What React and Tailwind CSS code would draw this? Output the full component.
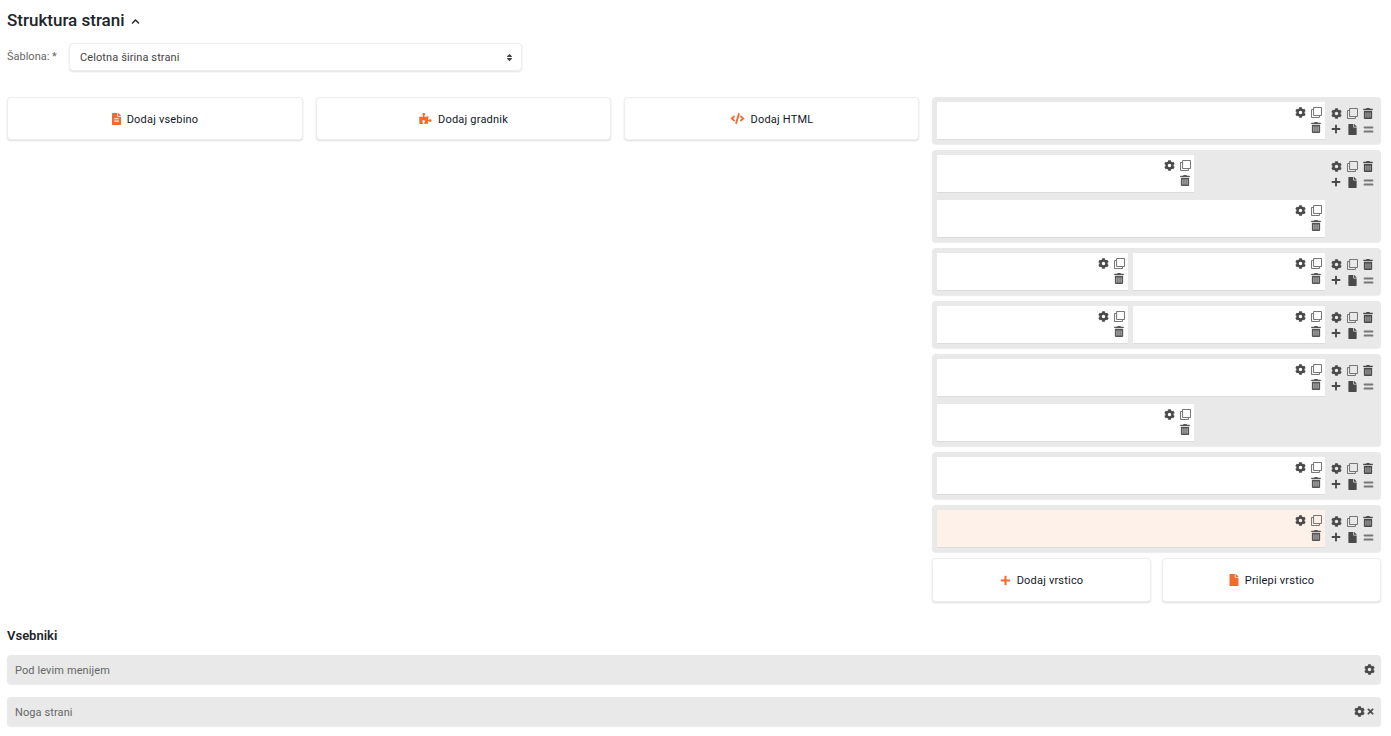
import React from 'react';
import { FaCog, FaRegClone, FaTrashAlt, FaPlus, FaFile, FaEquals, FaFileAlt, FaPuzzlePiece, FaCode, FaTimes, FaSort, FaChevronUp } from 'react-icons/fa';

const Cell = ({ width, tint }) => (
  <div className={`${width} h-[37px] ${tint ? 'bg-[#fdf1ea]' : 'bg-white'} flex flex-col items-end pt-[3px] pr-[3px] shadow-[0_1px_0_#dcdcdc]`}>
    <div className="flex items-center gap-[5px] h-[14px] text-[#4a4a4a]">
      <FaCog className="w-[11px] h-[11px]" />
      <FaRegClone className="w-[11px] h-[11px] text-[#777777]" />
    </div>
    <div className="flex items-center h-[14px] mt-[1px] mr-[1px] text-[#555555]">
      <FaTrashAlt className="w-[10px] h-[11px]" />
    </div>
  </div>
);

const RowTools = () => (
  <div className="w-[51px] shrink-0 grid grid-cols-[16px_16px_16px] grid-rows-[16px_16px] justify-items-center items-center content-start pl-[3px] pt-[3px] text-[#4a4a4a]">
    <FaCog className="w-[11px] h-[11px]" />
    <FaRegClone className="w-[11px] h-[11px] text-[#777777]" />
    <FaTrashAlt className="w-[10px] h-[11px]" />
    <FaPlus className="w-[10px] h-[10px]" />
    <FaFile className="w-[9px] h-[11px]" />
    <FaEquals className="w-[11px] h-[11px] text-[#777777]" />
  </div>
);

const Row = ({ children }) => (
  <div className="flex rounded-[4px] bg-[#e9e9e9] p-[5px] shadow-[0_1px_1px_rgba(0,0,0,0.08)]">
    <div className="w-[388px] shrink-0 flex flex-col gap-[8px]">{children}</div>
    <RowTools />
  </div>
);

const ActionButton = ({ icon, label, className = '', labelClass = 'pt-[2px]' }) => (
  <button className={`flex items-center justify-center gap-[6px] bg-white border border-[#eeeeee] rounded-[4px] shadow-[0_1px_2px_rgba(0,0,0,0.14)] text-[11px] text-[#111827] tracking-[0.2px] ${className}`}>
    {icon}
    <span className={labelClass}>{label}</span>
  </button>
);

const Container = ({ label, children }) => (
  <div className="h-[29px] flex items-center justify-between rounded-[4px] bg-[#e9e9e9] pl-[8px] pr-[6px] shadow-[0_1px_1px_rgba(0,0,0,0.08)] text-[11px] text-[#666666] tracking-[0.1px]">
    <span className="pt-[3px]">{label}</span>
    <div className="flex items-center gap-[1px] text-[#4a4a4a]">{children}</div>
  </div>
);

export default function App() {
  return (
    <div className="min-h-screen bg-white px-[7px] pt-[11px] font-['Roboto',sans-serif]">
      {/* Header */}
      <div className="flex items-center gap-[6px] h-[20px]">
        <h1 className="text-[17px] font-medium text-[#212529]">Struktura strani</h1>
        <FaChevronUp className="w-[9px] h-[9px] text-[#212529] mt-[1px]" />
      </div>

      {/* Predloga */}
      <div className="flex items-center mt-[12px] h-[28px]">
        <label className="w-[62px] text-[11px] text-[#666666]">Šablona: *</label>
        <div className="w-[453px] h-[28px] flex items-center justify-between bg-white border border-[#eeeeee] rounded-[4px] shadow-[0_1px_2px_rgba(0,0,0,0.12)] pl-[10px] pr-[7px] text-[11px] text-[#444444] tracking-[0.1px]">
          <span className="pt-[2px]">Celotna širina strani</span>
          <FaSort className="w-[9px] h-[9px] text-[#444444]" />
        </div>
      </div>

      {/* Struktura */}
      <div className="flex mt-[26px] gap-[13px]">
        <div className="w-[912px] grid grid-cols-[296px_295px_295px] gap-[13px] items-start">
          <ActionButton className="h-[43px]" labelClass="pt-[3px]" label="Dodaj vsebino" icon={<FaFileAlt className="w-[9px] h-[12px] text-[#f26b2e]" />} />
          <ActionButton className="h-[43px]" labelClass="pt-[3px]" label="Dodaj gradnik" icon={<FaPuzzlePiece className="w-[13px] h-[11px] text-[#f26b2e]" />} />
          <ActionButton className="h-[43px]" labelClass="pt-[3px]" label="Dodaj HTML" icon={<FaCode className="w-[15px] h-[11px] text-[#f26b2e]" />} />
        </div>

        <div className="w-[449px] flex flex-col gap-[6px]">
          <Row><Cell width="w-[388px]" /></Row>
          <Row>
            <Cell width="w-[257px]" />
            <Cell width="w-[388px]" />
          </Row>
          <Row>
            <div className="flex gap-[5px]">
              <Cell width="w-[191px]" />
              <Cell width="w-[192px]" />
            </div>
          </Row>
          <Row>
            <div className="flex gap-[5px]">
              <Cell width="w-[191px]" />
              <Cell width="w-[192px]" />
            </div>
          </Row>
          <Row>
            <Cell width="w-[388px]" />
            <Cell width="w-[257px]" />
          </Row>
          <Row><Cell width="w-[388px]" /></Row>
          <Row><Cell width="w-[388px]" tint /></Row>

          <div className="grid grid-cols-2 gap-[11px]">
            <ActionButton className="h-[44px]" label="Dodaj vrstico" icon={<FaPlus className="w-[11px] h-[11px] text-[#f26b2e]" />} />
            <ActionButton className="h-[44px]" label="Prilepi vrstico" icon={<FaFile className="w-[10px] h-[12px] text-[#f26b2e]" />} />
          </div>
        </div>
      </div>

      {/* Vsebniki */}
      <h2 className="mt-[26px] text-[13px] font-semibold text-[#212529] leading-[16px]">Vsebniki</h2>
      <div className="mt-[11px] flex flex-col gap-[13px] w-[1374px]">
        <Container label="Pod levim menijem">
          <FaCog className="w-[11px] h-[11px]" />
        </Container>
        <Container label="Noga strani">
          <FaCog className="w-[11px] h-[11px]" />
          <FaTimes className="w-[9px] h-[9px]" />
        </Container>
      </div>
    </div>
  );
}
